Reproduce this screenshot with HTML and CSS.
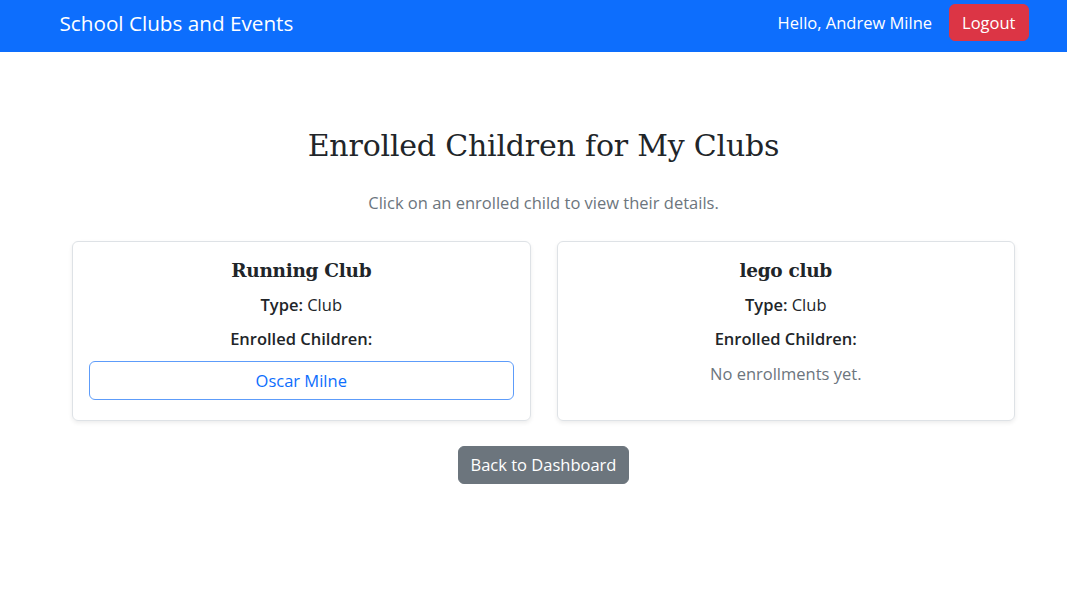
FILE: index.html
```html
<!DOCTYPE html>
<html lang="en">
<head>
<meta charset="utf-8">
<title>Enrolled Children for My Clubs</title>
<link rel="stylesheet" href="styles.css">
</head>
<body>
<nav class="navbar">
  <div class="nav-inner">
    <a class="brand" href="#">School Clubs and Events</a>
    <div class="nav-right">
      <span class="hello">Hello, Andrew Milne</span>
      <button class="btn btn-danger">Logout</button>
    </div>
  </div>
</nav>
<main class="main">
  <h2 class="page-title">Enrolled Children for My Clubs</h2>
  <p class="subtitle">Click on an enrolled child to view their details.</p>
  <div class="cards">
    <div class="card">
      <h5 class="card-title">Running Club</h5>
      <p class="line"><strong>Type:</strong> Club</p>
      <p class="line"><strong>Enrolled Children:</strong></p>
      <button class="btn btn-outline">Oscar Milne</button>
    </div>
    <div class="card">
      <h5 class="card-title">lego club</h5>
      <p class="line"><strong>Type:</strong> Club</p>
      <p class="line"><strong>Enrolled Children:</strong></p>
      <p class="line muted">No enrollments yet.</p>
    </div>
  </div>
  <div class="actions">
    <button class="btn btn-secondary">Back to Dashboard</button>
  </div>
</main>
</body>
</html>
```
FILE: styles.css
```css
* { box-sizing: border-box; }
html, body { margin: 0; padding: 0; }
body {
  font-family: "Open Sans", "Noto Sans", sans-serif;
  font-size: 16.5px;
  line-height: 24px;
  color: #212529;
  background: #fff;
  padding-left: 20px;
}
.navbar {
  background: #0d6efd;
  height: 52px;
  margin-left: -20px;
  padding-left: 20px;
}
.nav-inner {
  width: 968px;
  margin: 0 auto;
  height: 45px;
  display: flex;
  align-items: center;
  justify-content: space-between;
}
.brand {
  color: #fff;
  text-decoration: none;
  font-size: 20.7px;
  line-height: 30px;
}
.nav-right {
  display: flex;
  align-items: center;
  gap: 17px;
  margin-right: -1px;
}
.hello { color: #fff; font-size: 16.5px; }
.btn {
  font-family: inherit;
  font-size: 16.5px;
  line-height: 24px;
  padding: 6px 12px;
  border: 1px solid transparent;
  border-radius: 6px;
  cursor: pointer;
}
.btn-danger { background: #dc3545; color: #fff; border-color: #dc3545; height: 37px; }
.btn-secondary { background: #6c757d; color: #fff; border-color: #6c757d; height: 38px; }
.btn-outline {
  display: block;
  width: 100%;
  height: 39px;
  background: #fff;
  color: #0d6efd;
  border-color: #5d9cfa;
  margin-top: 10px;
}
.main {
  width: 943px;
  margin: 0 auto;
  padding-top: 75px;
}
.page-title {
  font-family: "DejaVu Serif", "Liberation Serif", serif;
  font-weight: 400;
  font-size: 30px;
  line-height: 38px;
  text-align: center;
  margin: 0;
  letter-spacing: -0.2px;
}
.subtitle {
  text-align: center;
  color: #6c757d;
  margin: 26px 0 26px;
}
.cards {
  display: grid;
  grid-template-columns: 1fr 1fr;
  gap: 26px;
}
.card {
  border: 1px solid #dee2e6;
  border-radius: 6px;
  box-shadow: 0 2px 4px rgba(0,0,0,0.075);
  padding: 17px 16px 20px;
  text-align: center;
}
.card-title {
  font-family: "DejaVu Serif", "Liberation Serif", serif;
  font-weight: 700;
  font-size: 18.5px;
  line-height: 24px;
  margin: 0 0 10px;
  letter-spacing: -0.3px;
}
.line { margin: 0 0 10px; }
.line strong { font-weight: 600; }
.muted { color: #6c757d; margin-top: 11px; }
.actions {
  display: flex;
  justify-content: center;
  margin-top: 25px;
}
```
